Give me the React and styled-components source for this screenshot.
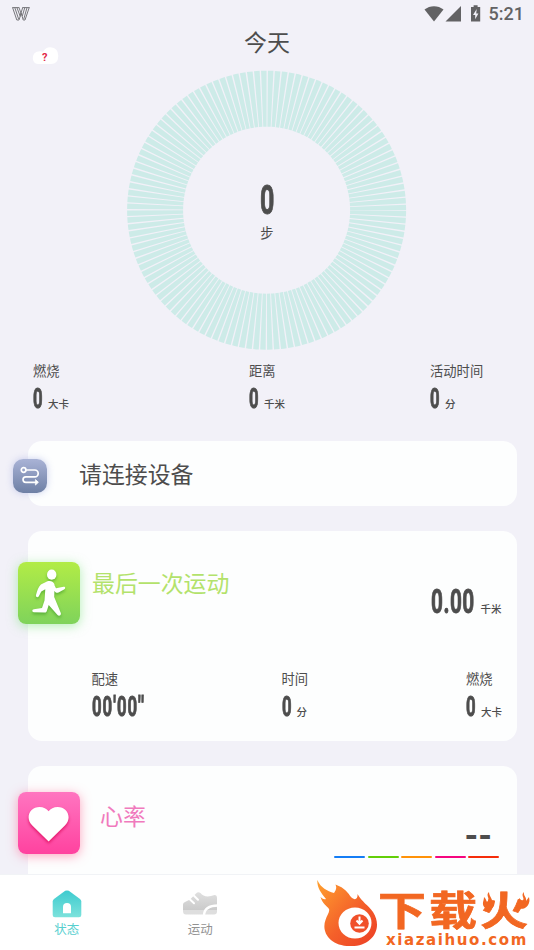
import React from "react";
import styled, { createGlobalStyle } from "styled-components";

const dayStats = [
  { label: "燃烧", value: "0", unit: "大卡" },
  { label: "距离", value: "0", unit: "千米" },
  { label: "活动时间", value: "0", unit: "分" },
];

const workoutStats = [
  { label: "配速", value: "00'00''", unit: "" },
  { label: "时间", value: "0", unit: "分" },
  { label: "燃烧", value: "0", unit: "大卡" },
];

const zones = ["#147df5", "#62cf08", "#ff9208", "#f5057f", "#f52d0a"];

const TICKS = 124;

const Ring = () => {
  const step = (2 * Math.PI * 111.5) / TICKS;
  return (
    <svg width="280" height="280" viewBox="0 0 280 280">
      <circle
        cx="139.6"
        cy="140.2"
        r="111.5"
        fill="none"
        stroke="#cdebe8"
        strokeWidth="56"
        strokeDasharray={`${step * 0.8} ${step * 0.2}`}
        strokeDashoffset={-step * 0.1}
      />
    </svg>
  );
};

const StatusIcons = () => (
  <svg width="58" height="18" viewBox="0 0 58 18" fill="#626264">
    <path d="M0.5 4.6C6 0 14 0 19.5 4.6L10 16.5Z" />
    <path d="M37 1V16.5H21.5Z" />
    <path d="M47 2h2.6V.3h4v1.7h2.6V16.5H47Z" />
    <path d="M52.7 4l-3.7 6h2.2v4.2l3.2-5.8h-2.2Z" fill="#f2f1f8" />
  </svg>
);

const VLogo = () => (
  <svg width="18" height="14" viewBox="0 0 18 14" fill="none" stroke="#77777b" strokeWidth="1">
    <path d="M.3.6H7.3M10.3.6H17.6M.6.6L4.8 13H7L9.2 6L11.2 13H13L17.2.6M2.8.6L6.6 12M4.9.6L8.3 9.5M7 .6L9.7 8.2M10.7.6L8.2 8.5M15 .6L11.8 12M12.8.6L10.3 9" />
  </svg>
);

const RouteIcon = () => (
  <svg width="34" height="34" viewBox="0 0 34 34" fill="none" stroke="#fff" strokeWidth="1.7" strokeLinecap="round">
    <circle cx="10.6" cy="11" r="2.3" />
    <path d="M13.5 11H21.8a3.4 3.4 0 0 1 0 6.8H12.8a2.7 2.7 0 0 0 0 5.5H22.5" />
    <path d="M22.7 20.8L25.4 23.3L22.7 25.8Z" fill="#fff" strokeWidth=".8" />
  </svg>
);

const RunnerIcon = () => (
  <svg width="62" height="62" viewBox="0 0 62 62" fill="#fff">
    <ellipse cx="33.7" cy="12.7" rx="4.7" ry="5.1" />
    <path d="M29.5 19.2C32.5 18.6 36.5 20 36.6 23.4L38 26.3L45.5 24.8C47.5 24.5 47.8 26.6 46 27.5L40.5 30.5C38.7 31.3 37 30.2 36.4 28.7L36.2 35L42.7 50.7C43.7 53 41 55 39.3 52.7L30.7 43L28.8 49C28.3 50.4 27.7 50.7 26.5 50.6L15.9 50.2C13.8 50 13.8 47.5 15.9 47.2L24 46L26.5 38.5L27.3 27.2L23.3 29.6L20.7 34.4C19.5 36 17.5 35 18 32.9C19 28.8 20.5 24.8 22.9 22.4Z" />
  </svg>
);

const HeartIcon = () => (
  <svg width="62" height="62" viewBox="0 0 62 62" fill="#fff">
    <path d="M30.6 49.5L14.3 33.6C6.5 25.6 12 15 21.5 15C25.6 15 28.6 16.7 30.6 19.3C32.6 16.7 35.6 15 39.7 15C49.2 15 54.7 25.6 46.9 33.6Z" />
  </svg>
);

const HomeIcon = () => (
  <svg width="30" height="28" viewBox="0 0 30 28">
    <defs>
      <linearGradient id="home" x2="0" y2="1">
        <stop stopColor="#3dcbcf" />
        <stop offset="1" stopColor="#7ce2dc" />
      </linearGradient>
    </defs>
    <path fill="url(#home)" d="M13.2.8Q15 0 16.8.8L28 9Q29.3 10 29.3 11.5V25Q29.3 27.3 27 27.3H3Q.7 27.3 .7 25V11.5Q.7 10 2 9Z" />
    <path fill="#fff" d="M11 23.3V17a4 4 0 0 1 8 0V23.3Z" />
  </svg>
);

const ShoeIcon = () => (
  <svg width="36" height="28" viewBox="0 0 36 28">
    <defs>
      <linearGradient id="shoe" x2="0" y2="1">
        <stop stopColor="#e0e0e0" />
        <stop offset=".78" stopColor="#cbcbcb" />
        <stop offset=".8" stopColor="#dedede" />
        <stop offset="1" stopColor="#dedede" />
      </linearGradient>
    </defs>
    <path fill="url(#shoe)" d="M1 14.5Q1 12.6 3 12L8 9.5L14 3.5Q16 1.2 18.5 3Q22 7.5 29 6L32.5 5Q35 5 35 8V21.5Q35 24.5 32 24.5H4Q1 24.5 1 21Z" />
    <path d="M7.5 9L12 13.2M12 5.8L16 9.8" stroke="#fff" strokeWidth="2" strokeLinecap="round" />
    <path d="M22 25Q22.5 15.7 36 15.5" fill="none" stroke="#fff" strokeWidth="2.4" />
  </svg>
);

const FlameLogo = () => (
  <svg width="62" height="68" viewBox="0 0 62 68">
    <defs>
      <linearGradient id="flame" x1="0" x2="1" y2="1">
        <stop stopColor="#ffa12f" />
        <stop offset=".55" stopColor="#f4602a" />
        <stop offset="1" stopColor="#ec3e25" />
      </linearGradient>
    </defs>
    <path fill="url(#flame)" d="M.3 0C4 8 10 11 17 13C19 10 20 8 18.5 4.5C28 8 31 13 34 17C38 21 41 19 40.5 14C45 22 51 25 56 32C67 49 54 67 33 66C13 66 4 52 8.5 40C10 35 13 32 12 29C10 26 5 23 3.5 17C5 18.5 7 20 9 19C4 13 0 8 .3 0Z" />
    <ellipse cx="38" cy="43" rx="16.5" ry="15.5" fill="#fff" />
    <circle cx="42.5" cy="43.5" r="9.3" fill="#f0502a" />
    <path d="M42.5 36.5V43M39.5 40.5L42.5 43.7L45.5 40.5M37.5 47.5H47.5" stroke="#fff" strokeWidth="2" fill="none" />
  </svg>
);

const Stat = ({ label, value, unit }) => (
  <div>
    <Label>{label}</Label>
    <ValueRow>
      <Digits $size={27} $width={unit ? 15 : 56} $squeeze={unit ? 0.62 : 0.62} $spacing={unit ? 0 : 1.6}>
        <span>{value}</span>
      </Digits>
      {unit && <Unit>{unit}</Unit>}
    </ValueRow>
  </div>
);

const App = () => (
  <>
    <GlobalStyle />
    <Screen>
      <Content>
        <StatusBar>
          <VLogo />
          <StatusRight>
            <StatusIcons />
            <Clock>5:21</Clock>
          </StatusRight>
        </StatusBar>
        <Header>
          今天
          <Weather>
            <svg width="28" height="18" viewBox="0 0 28 18" fill="#fff">
              <path d="M6 17Q.8 16.5 .8 11Q1 4.2 8 4.2Q10 4.2 11 5Q13 .3 18.5 .3Q26.3 1 26.3 9Q26 17 19 17Z" />
            </svg>
            <b>?</b>
          </Weather>
        </Header>
        <RingBox>
          <Ring />
          <RingValue>
            <Digits $size={41} $width={15} $squeeze={0.61}>
              <span>0</span>
            </Digits>
            <Label>步</Label>
          </RingValue>
        </RingBox>
        <DayStats>
          {dayStats.map((s) => (
            <Stat key={s.label} {...s} />
          ))}
        </DayStats>

        <ConnectCard>
          <ConnectIcon>
            <RouteIcon />
          </ConnectIcon>
          <CardTitle>请连接设备</CardTitle>
        </ConnectCard>

        <WorkoutCard>
          <CardTop>
            <Tile $from="#b2ec46" $to="#7fd35b" $glow="rgba(110, 225, 110, .5)" $shade="rgba(60, 150, 40, .6)">
              <RunnerIcon />
            </Tile>
            <CardTitle $color="#b3e26b">最后一次运动</CardTitle>
            <Distance>
              <Digits $size={34} $width={49.5} $squeeze={0.61} $spacing={0.8}>
                <span>0.00</span>
              </Digits>
              <Unit>千米</Unit>
            </Distance>
          </CardTop>
          <WorkoutStats>
            {workoutStats.map((s) => (
              <Stat key={s.label} {...s} />
            ))}
          </WorkoutStats>
        </WorkoutCard>

        <HeartCard>
          <Tile $from="#ff75c0" $to="#ff429f" $glow="rgba(255, 80, 130, .5)" $shade="rgba(215, 0, 80, .7)">
            <HeartIcon />
          </Tile>
          <HeartTitle $color="#f07abd">心率</HeartTitle>
          <HeartValue>
            <Rate>--</Rate>
            <Zones>
              {zones.map((color) => (
                <Zone key={color} $color={color} />
              ))}
            </Zones>
          </HeartValue>
        </HeartCard>
      </Content>

      <Nav>
        <NavItem $color="#57cfcf">
          <HomeIcon />
          状态
        </NavItem>
        <NavItem $color="#929292">
          <ShoeIcon />
          运动
        </NavItem>
        <Watermark>
          <FlameLogo />
          <Brand>
            <BrandName>
              <span>下</span>
              <span>载</span>
              <span>火</span>
              <Sparks width="48" height="20" viewBox="0 0 48 20">
                <path d="M7 0C3 4 9 6 5 10C4 8 4 7 2 5C2 9-1 12 3 16C8 19 14 16 12 9L9 12C12 7 7 5 7 0ZM42 0C38 4 44 6 40 9C38 8 39 7 37 6C38 10 33 11 35 14C38 19 45 17 47 11C48 8 47 6 47 5L44 9C45 5 41 4 42 0Z" />
              </Sparks>
            </BrandName>
            <BrandUrl>xiazaihuo.com</BrandUrl>
          </Brand>
        </Watermark>
      </Nav>
    </Screen>
  </>
);

const GlobalStyle = createGlobalStyle`
  * {
    box-sizing: border-box;
  }
  body {
    margin: 0;
    background: #f2f1f8;
    color: #4d4d4d;
    font-family: Roboto, "Noto Sans CJK SC", sans-serif;
  }
  svg {
    display: block;
    flex: none;
  }
`;

const Screen = styled.div`
  width: 534px;
  height: 950px;
  display: flex;
  flex-direction: column;
  overflow: hidden;
`;

const Content = styled.main`
  height: 875px;
  flex: none;
  overflow: hidden;
`;

const StatusBar = styled.div`
  height: 27px;
  padding: 0 10px 0 12px;
  display: flex;
  align-items: center;
  justify-content: space-between;
`;

const StatusRight = styled.div`
  display: flex;
  align-items: center;
  gap: 7px;
`;

const Clock = styled.span`
  font-size: 18px;
  font-weight: 500;
  line-height: 27px;
  color: #626264;
`;

const Header = styled.header`
  position: relative;
  height: 32px;
  line-height: 34px;
  font-size: 23px;
  text-align: center;
`;

const Weather = styled.div`
  position: absolute;
  left: 32px;
  top: 20px;
  b {
    position: absolute;
    left: 10px;
    top: 2px;
    font-size: 11px;
    line-height: 18px;
    color: #e22848;
  }
`;

const RingBox = styled.div`
  width: 280px;
  height: 280px;
  margin: 11px auto 0;
  display: grid;
  place-items: center;
  > * {
    grid-area: 1 / 1;
  }
`;

const RingValue = styled.div`
  display: flex;
  flex-direction: column;
  align-items: center;
  gap: 4px;
  padding-top: 8px;
`;

const Digits = styled.span`
  display: block;
  width: ${(p) => p.$width}px;
  height: ${(p) => p.$size * 0.86}px;
  line-height: ${(p) => p.$size * 0.86}px;
  font-size: ${(p) => p.$size}px;
  font-weight: 700;
  letter-spacing: ${(p) => p.$spacing || 0}px;
  white-space: nowrap;
  span {
    display: inline-block;
    transform: scaleX(${(p) => p.$squeeze});
    transform-origin: left;
    -webkit-text-stroke: 0.9px currentColor;
  }
`;

const Label = styled.div`
  font-size: 13.3px;
  line-height: 22px;
`;

const ValueRow = styled.div`
  display: flex;
  align-items: flex-end;
  margin-top: 4px;
  height: 24px;
`;

const Unit = styled.span`
  position: relative;
  top: 1px;
  font-size: 10.5px;
  font-weight: 500;
  line-height: 14px;
`;

const DayStats = styled.section`
  display: grid;
  grid-template-columns: 216px 181px auto;
  margin-top: 11px;
  padding-left: 33px;
`;

const Card = styled.section`
  margin: 25px 17px 0 28px;
  border-radius: 14px;
  background: #fdfefe;
`;

const CardTitle = styled.h2`
  margin: 0;
  font-size: 22.9px;
  font-weight: 400;
  line-height: 30px;
  color: ${(p) => p.$color || "inherit"};
`;

const ConnectCard = styled(Card)`
  display: flex;
  align-items: center;
  gap: 32px;
  height: 65px;
  margin-top: 30px;
  ${CardTitle} {
    padding-top: 4px;
  }
`;

const ConnectIcon = styled.div`
  width: 34px;
  height: 34px;
  margin: 4px 0 0 -15px;
  border-radius: 10px;
  background: linear-gradient(#a9b3d6, #6e80a5);
  box-shadow: 0 0 7px rgba(140, 150, 220, 0.45);
`;

const WorkoutCard = styled(Card)`
  height: 210px;
  padding-top: 31px;
`;

const CardTop = styled.div`
  display: flex;
  align-items: flex-start;
  gap: 12px;
  height: 107px;
  margin-left: -10px;
  ${CardTitle} {
    margin-top: 8px;
  }
`;

const Tile = styled.div`
  flex: none;
  width: 62px;
  height: 62px;
  border-radius: 8px;
  background: linear-gradient(${(p) => p.$from}, ${(p) => p.$to});
  box-shadow: 0 2px 11px ${(p) => p.$glow};
  svg {
    filter: drop-shadow(0 2px 1.5px ${(p) => p.$shade});
  }
`;

const Distance = styled.div`
  display: flex;
  align-items: flex-end;
  margin: 25px 15.5px 0 auto;
`;

const WorkoutStats = styled.div`
  display: grid;
  grid-template-columns: 190px 184.5px auto;
  padding-left: 63.5px;
`;

const HeartCard = styled(Card)`
  display: flex;
  height: 160px;
  padding: 26px 18px 0 0;
  ${Tile} {
    margin-left: -10px;
  }
`;

const HeartTitle = styled(CardTitle)`
  margin: 11px 0 0 20px;
`;

const HeartValue = styled.div`
  margin-left: auto;
  padding-top: 26px;
`;

const Rate = styled.div`
  padding-right: 7px;
  font-size: 35px;
  font-weight: 700;
  line-height: 38px;
  text-align: right;
`;

const Zones = styled.div`
  display: flex;
  gap: 2.5px;
`;

const Zone = styled.i`
  width: 31px;
  height: 2px;
  border-radius: 1px;
  background: ${(p) => p.$color};
`;

const Nav = styled.nav`
  position: relative;
  flex: none;
  height: 75px;
  display: grid;
  grid-template-columns: repeat(4, 1fr);
  background: #fff;
  box-shadow: 0 -1px 0 #f1f3f6;
`;

const NavItem = styled.div`
  display: flex;
  flex-direction: column;
  align-items: center;
  gap: 3px;
  padding-top: 15px;
  font-size: 12.5px;
  line-height: 18px;
  color: ${(p) => p.$color};
`;

const Watermark = styled.div`
  position: absolute;
  left: 317px;
  top: 5px;
  display: flex;
`;

const Brand = styled.div`
  color: #f26722;
`;

const BrandName = styled.div`
  position: relative;
  display: flex;
  gap: 3px;
  height: 53px;
  margin-left: -1px;
  line-height: 66px;
  font-size: 48px;
  font-weight: 700;
  -webkit-text-stroke: 0.8px #f26722;
  span {
    transform: scaleY(0.83);
  }
`;

const Sparks = styled.svg`
  position: absolute;
  left: 104px;
  top: 12px;
  fill: #f26722;
`;

const BrandUrl = styled.div`
  padding-left: 7px;
  font-family: "DejaVu Sans", sans-serif;
  font-size: 15px;
  font-weight: 700;
  line-height: 15px;
  letter-spacing: 1.6px;
`;

export default App;
